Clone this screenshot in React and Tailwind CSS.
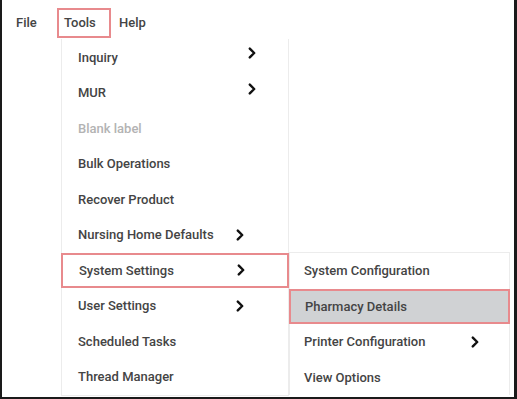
import React from 'react';

const Chevron = ({ className = '' }) => (
  <svg width="8" height="12" viewBox="0 0 8 12" className={className}>
    <polyline points="1.8,1.6 6.2,6 1.8,10.4" fill="none" stroke="#111" strokeWidth="2.4" strokeLinecap="round" strokeLinejoin="round" />
  </svg>
);

const toolsItems = [
  { label: 'Inquiry', chevron: 'far' },
  { label: 'MUR', chevron: 'far' },
  { label: 'Blank label', disabled: true },
  { label: 'Bulk Operations' },
  { label: 'Recover Product' },
  { label: 'Nursing Home Defaults', chevron: 'near' },
  { label: 'System Settings', chevron: 'near', active: true },
  { label: 'User Settings', chevron: 'near' },
  { label: 'Scheduled Tasks' },
  { label: 'Thread Manager' },
];

const subItems = [
  { label: 'System Configuration' },
  { label: 'Pharmacy Details', selected: true },
  { label: 'Printer Configuration', chevron: true },
  { label: 'View Options' },
];

const App = () => {
  return (
    <div
      className="w-[517px] h-[399px] bg-white border-l-2 border-r-[3px] border-b-2 border-[#1a1a1a] overflow-hidden text-[13px] font-medium text-[#444444]"
      style={{ fontFamily: 'Roboto, "Liberation Sans", sans-serif' }}
    >
      {/* Menu bar */}
      <div className="flex items-start h-[39px] pt-[8px]">
        <span className="ml-[14px] w-[41px] h-[30px] flex items-center">File</span>
        <span className="h-[30px] w-[54px] pl-[5px] flex items-center border-2 border-[#e88a8d]">Tools</span>
        <span className="ml-[8px] h-[30px] flex items-center">Help</span>
      </div>

      <div className="flex items-start">
        {/* Tools dropdown */}
        <div className="ml-[59px] w-[228px] border border-t-0 border-[#ececec] bg-white pt-[0.5px]">
          {toolsItems.map((it) => (
            <div
              key={it.label}
              className={`h-[35.5px] flex items-center pl-[16px] ${
                it.active ? 'border-2 border-[#e88a8d] -mx-px pl-[15px]' : ''
              } ${it.disabled ? 'text-[#b3b3b3]' : ''}`}
            >
              <span className={it.chevron === 'far' ? 'w-[170px]' : 'w-[158px]'}>{it.label}</span>
              {it.chevron === 'far' && <Chevron className="-mt-[8px]" />}
              {it.chevron === 'near' && <Chevron />}
            </div>
          ))}
        </div>

        {/* System Settings submenu */}
        <div className="mt-[213px] w-[221px] border border-[#ececec] border-b-0 bg-white">
          {subItems.map((it) => (
            <div
              key={it.label}
              className={`h-[35.5px] flex items-center pl-[14px] ${
                it.selected ? 'bg-[#d0d2d4] border-2 border-[#e88a8d] -mx-px pl-[13px]' : ''
              }`}
            >
              <span className="w-[167px]">{it.label}</span>
              {it.chevron && <Chevron />}
            </div>
          ))}
        </div>
      </div>
    </div>
  );
};

export default App;
